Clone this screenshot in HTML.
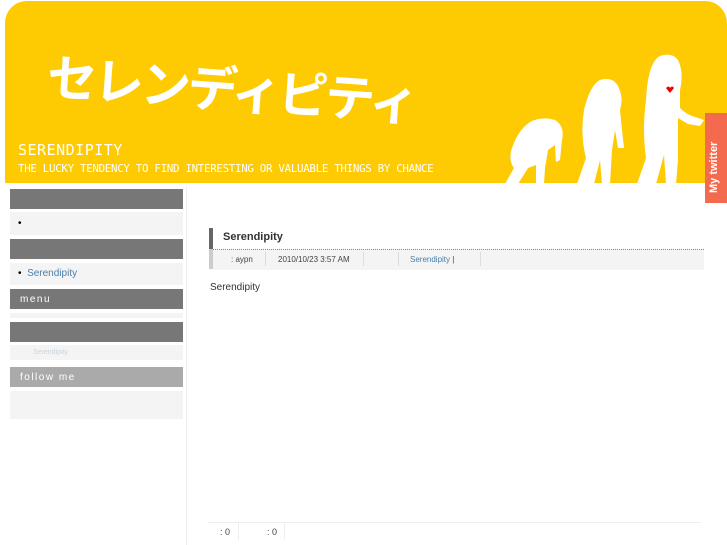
<!DOCTYPE html>
<html><head><meta charset="utf-8"><style>
body{margin:0;width:727px;height:545px;overflow:hidden;background:#fff;font-family:"Liberation Sans",sans-serif;position:relative}
.hd{position:absolute;left:5px;top:1px;width:722px;height:182px;background:#fecb02;border-radius:22px 22px 0 0}
.kt{position:absolute;left:50px;top:38px;color:#fff;font:bold 50px "WenQuanYi Zen Hei","Noto Sans CJK JP",sans-serif;letter-spacing:-3px;transform:rotate(4deg);transform-origin:left top}
.t1{position:absolute;left:18px;top:141px;color:#fff;font-size:15px;letter-spacing:0.5px;font-family:"DejaVu Sans Mono",monospace}
.t2{position:absolute;left:18px;top:162px;color:#fff;font-size:10.8px;font-family:"DejaVu Sans Mono",monospace;letter-spacing:-0.3px}
.side{position:absolute;left:10px;width:173px}
.bar{background:#777;height:20px;color:#fff;font-size:10px;letter-spacing:1.5px;line-height:20px;padding-left:10px;box-sizing:border-box}
.box{background:#f4f4f4}
.vl{position:absolute;left:186px;top:186px;width:1px;height:359px;background:#eee}
.tw{position:absolute;left:705px;top:113px;width:22px;height:90px;background:#f46a4e}
.tw span{position:absolute;left:3px;top:80px;transform:rotate(-90deg);transform-origin:left top;color:#fff;font:bold 11px "Liberation Sans",sans-serif;white-space:nowrap}
</style></head><body>
<div class="hd"></div>
<div class="kt">セレンディピティ</div>
<div class="t1">SERENDIPITY</div>
<div class="t2">THE LUCKY TENDENCY TO FIND INTERESTING OR VALUABLE THINGS BY CHANCE</div>
<svg style="position:absolute;left:500px;top:50px" width="205" height="134" viewBox="0 0 205 134" fill="#fff">
<path d="M5 134 L14 118 Q8 110 12 98 Q18 80 30 72 Q42 66 55 70 Q65 76 62 90 L60 110 L56 112 L55 95 L48 100 L45 118 L44 134 L36 134 L36 115 L28 118 L18 134Z"/>
<path d="M77 134 L86 108 Q80 85 84 60 Q90 35 100 30 Q112 26 118 36 Q124 48 120 60 L122 80 L124 98 L118 98 L115 80 L112 100 L110 134 L102 134 L100 110 L94 134Z"/>
<path d="M137 134 L146 108 Q142 80 146 50 Q148 12 160 6 Q172 2 178 10 Q184 22 180 40 L180 58 Q186 64 192 66 L204 70 L200 76 L188 74 L178 68 L178 110 L176 134 L166 134 L164 105 L156 134Z"/>
<path fill="#e00" d="M166 38 q3-3 4 0 q2-3 4 0 l-4 5z"/>
</svg>
<div class="tw"><span>My twitter</span></div>
<div class="side" style="top:189px"><div class="bar"></div></div>
<div class="side box" style="top:212px;height:23px"><span style="position:absolute;left:8px;top:6px;font-size:10px">•</span></div>
<div class="side" style="top:239px"><div class="bar"></div></div>
<div class="side box" style="top:263px;height:22px"><span style="position:absolute;left:8px;top:5px;font-size:10px">• &nbsp;<span style="color:#4a7ea8">Serendipity</span></span></div>
<div class="side" style="top:289px"><div class="bar" style="padding-top:1px">menu</div></div>
<div class="side box" style="top:313px;height:5px"></div>
<div class="side" style="top:322px"><div class="bar"></div></div>
<div class="side box" style="top:345px;height:15px"><span style="position:absolute;left:23px;top:4px;font-size:7px;color:#c8d4de">Serendipity</span></div>
<div class="side" style="top:367px"><div class="bar" style="background:#aaa;padding-top:1px">follow me</div></div>
<div class="side box" style="top:391px;height:28px"></div>
<div class="vl"></div>
<div style="position:absolute;left:209px;top:228px;width:4px;height:21px;background:#666"></div>
<div style="position:absolute;left:209px;top:249px;width:4px;height:20px;background:#ccc"></div>
<div style="position:absolute;left:223px;top:231px;font-weight:bold;font-size:11px;color:#333">Serendipity</div>
<div style="position:absolute;left:213px;top:249px;width:491px;border-top:1px dotted #888;height:20px;background:#f4f4f4;font-size:8px;color:#444">
<span style="position:absolute;left:18px;top:5px">: aypn</span>
<span style="position:absolute;left:52px;top:2px;width:1px;height:14px;background:#ddd"></span>
<span style="position:absolute;left:65px;top:5px">2010/10/23 3:57 AM</span>
<span style="position:absolute;left:150px;top:2px;width:1px;height:14px;background:#ddd"></span>
<span style="position:absolute;left:185px;top:2px;width:1px;height:14px;background:#ddd"></span>
<span style="position:absolute;left:197px;top:5px;color:#4a7ea8">Serendipity <span style="color:#444">|</span></span>
<span style="position:absolute;left:267px;top:2px;width:1px;height:14px;background:#ddd"></span>
</div>
<div style="position:absolute;left:210px;top:282px;font-size:10px;color:#333">Serendipity</div>
<div style="position:absolute;left:208px;top:522px;width:493px;height:1px;background:#eee"></div>
<div style="position:absolute;left:220px;top:527px;font-size:9px;color:#444">: 0</div>
<div style="position:absolute;left:238px;top:523px;width:1px;height:17px;background:#eee"></div>
<div style="position:absolute;left:267px;top:527px;font-size:9px;color:#444">: 0</div>
<div style="position:absolute;left:284px;top:523px;width:1px;height:17px;background:#eee"></div>
</body></html>
